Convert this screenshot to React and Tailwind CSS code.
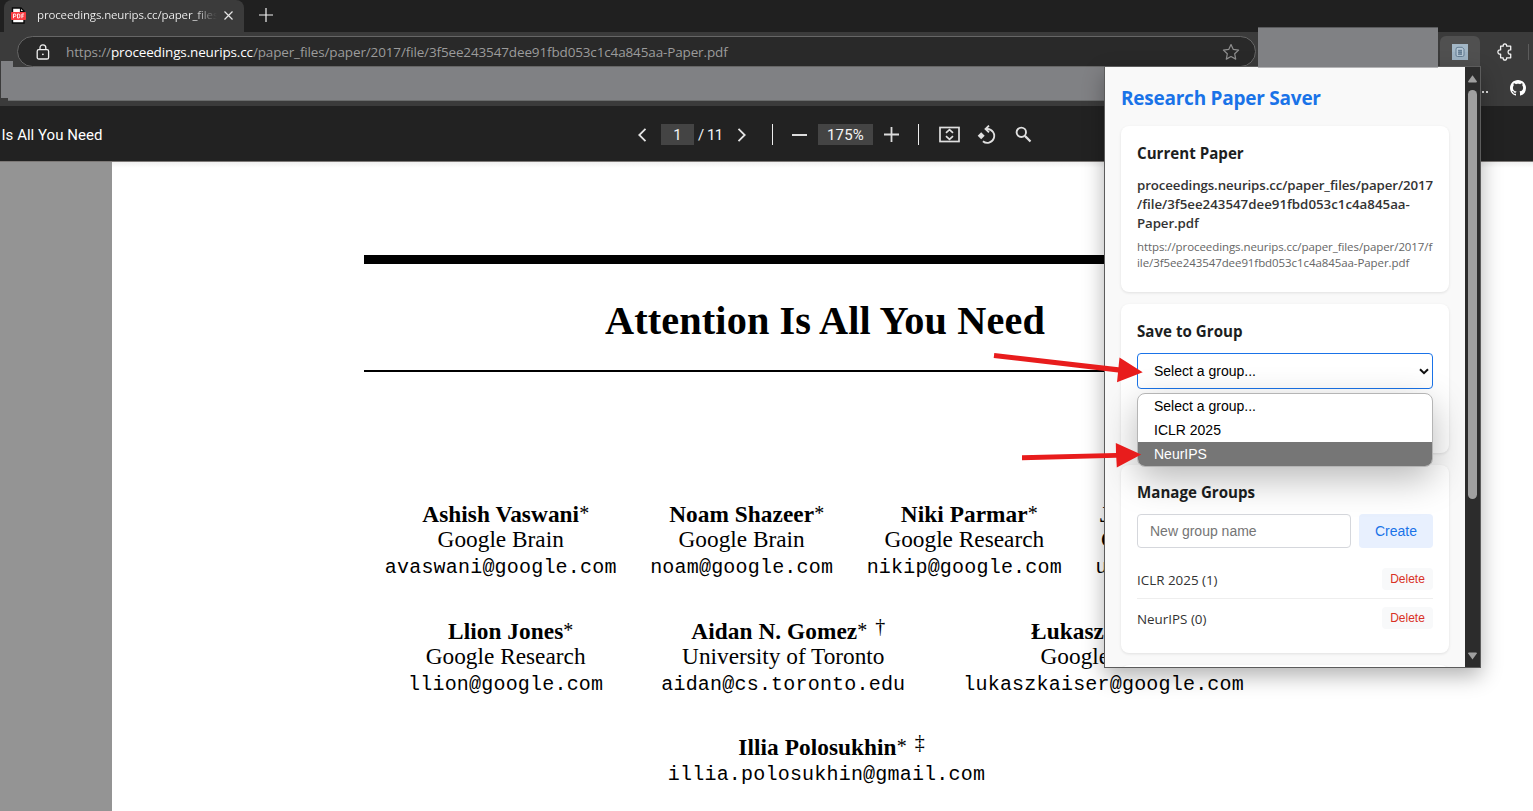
const segoe = "font-['Open_Sans','Noto_Sans',sans-serif]";
const arial = "font-['Liberation_Sans',Arial,sans-serif]";

function PdfFileIcon() {
  return (
    <svg width="15" height="17" viewBox="0 0 15 17" className="shrink-0">
      <path d="M1.5 1H10l3 3v12H1.5z" fill="#fff" stroke="#0a0a0a" strokeWidth="1.4" />
      <path d="M9.5 1v3.5H13" fill="none" stroke="#0a0a0a" strokeWidth="1.2" />
      <rect x="0" y="5" width="15" height="8" rx="0.8" fill="#f83c41" />
      <path
        d="M2.5 11.2V7h1.2a1.2 1.2 0 0 1 0 2.5H2.5M6.5 7v4h.9a1.6 1.6 0 0 0 1.5-2A1.6 1.6 0 0 0 7.4 7zM10.9 11.2V7h2.2M10.9 9.1h1.8"
        fill="none"
        stroke="#fff"
        strokeWidth="0.9"
      />
    </svg>
  );
}

function LockIcon() {
  return (
    <svg width="14" height="16" viewBox="0 0 14 16" fill="none" stroke="#f0f0f0" strokeWidth="1.3">
      <rect x="1.2" y="5.6" width="11.4" height="9.4" rx="1.6" />
      <path d="M4 5.6V3.8C4 2 5.2.8 6.9.8s2.9 1.2 2.9 3v1.8" />
      <circle cx="6.9" cy="10.3" r="0.9" fill="#f0f0f0" stroke="none" />
    </svg>
  );
}

function StarIcon() {
  return (
    <svg width="18" height="18" viewBox="0 0 18 18" fill="none" stroke="#8f8f8f" strokeWidth="1.2" strokeLinejoin="round">
      <path d="M9 1.5l2.3 4.9 5.3.7-3.9 3.7 1 5.3L9 13.5l-4.7 2.6 1-5.3L1.4 7.1l5.3-.7z" />
    </svg>
  );
}

function PuzzleIcon() {
  return (
    <svg width="16" height="18" viewBox="0 0 16 18" fill="none" stroke="#f2f2f2" strokeWidth="1.3" strokeLinejoin="round">
      <path d="M3.6 3.2h2.6C6 1.700 6.700.9 7.900.9s1.900.8 1.700 2.300h4.100v3.700c-1.700-.2-2.600.7-2.600 2.100s.9 2.300 2.600 2.100v3.700h-4.100c.2 1.500-.5 2.300-1.700 2.300s-1.900-.8-1.700-2.300H3.600v-3.700C1.900 11.300.9 10.400.9 9s1-2.300 2.700-2.100z" />
    </svg>
  );
}

function ExtensionIcon() {
  return (
    <svg width="16" height="16" viewBox="0 0 16 16">
      <rect width="16" height="16" fill="#9db2c3" />
      <rect width="16" height="8" fill="#a9bbc9" opacity="0.5" />
      <path d="M6 3.300h4.200L12 5.200V11a1.500 1.500 0 0 1-1.500 1.500h-5A1.500 1.500 0 0 1 4 11V5.200A1.900 1.900 0 0 1 6 3.300z" fill="#b4c6d4" stroke="#647d93" strokeWidth="1" />
      <rect x="6.200" y="6" width="3.800" height="4.600" fill="#7f97ab" />
      <path d="M6 6.300h4M6 8.300h4M6 10.300h4" stroke="#566f86" strokeWidth="0.8" />
    </svg>
  );
}

function GithubIcon() {
  return (
    <svg width="16" height="16" viewBox="0 0 16 16" fill="#fff">
      <path d="M8 0C3.58 0 0 3.58 0 8c0 3.54 2.29 6.53 5.47 7.59.4.07.55-.17.55-.38 0-.19-.01-.82-.01-1.49-2.01.37-2.53-.49-2.69-.94-.09-.23-.48-.94-.82-1.13-.28-.15-.68-.52-.01-.53.63-.01 1.08.58 1.23.82.72 1.21 1.87.87 2.33.66.07-.52.28-.87.51-1.07-1.78-.2-3.64-.89-3.64-3.95 0-.87.31-1.59.82-2.15-.08-.2-.36-1.02.08-2.12 0 0 .67-.21 2.2.82.64-.18 1.32-.27 2-.27s1.36.09 2 .27c1.53-1.04 2.2-.82 2.2-.82.44 1.1.16 1.92.08 2.12.51.56.82 1.27.82 2.15 0 3.07-1.87 3.75-3.65 3.95.29.25.54.73.54 1.48 0 1.07-.01 1.93-.01 2.2 0 .21.15.46.55.38A8.01 8.01 0 0 0 16 8c0-4.42-3.58-8-8-8z" />
    </svg>
  );
}

function TabStrip() {
  return (
    <div className="flex h-8 shrink-0 bg-[#202020]">
      <div className={`ml-1 flex h-8 w-[240px] items-center rounded-t-lg bg-[#3b3b3b] pb-[2px] pl-[7px] ${segoe}`}>
        <PdfFileIcon />
        <div className="ml-[11px] w-[180px] overflow-hidden bg-linear-to-r from-[#f4f4f4] from-88% to-[#3b3b3b] bg-clip-text text-[11.5px] tracking-[-0.14px] whitespace-nowrap text-transparent">
          proceedings.neurips.cc/paper_files
        </div>
        <svg width="9" height="9" viewBox="0 0 9 9" stroke="#e6e6e6" strokeWidth="1.2" className="ml-[7px]">
          <path d="M.5.5l8 8M8.500.5l-8 8" />
        </svg>
      </div>
      <svg width="14" height="14" viewBox="0 0 14 14" stroke="#f2f2f2" strokeWidth="1.2" className="mt-2 ml-[15px]">
        <path d="M7 0v14M0 7h14" />
      </svg>
    </div>
  );
}

function AddressBar() {
  return (
    <div className="flex h-[41px] shrink-0 items-start bg-[#3b3b3b] pt-1 pl-[17px]">
      <div className={`flex h-[31px] w-[1239px] items-center rounded-full border border-[#666] bg-[#292929] pl-[18px] ${segoe}`}>
        <LockIcon />
        <div className="ml-[16px] flex-1 pt-[2px] text-[13.5px] tracking-[-0.14px] whitespace-nowrap text-[#9b9b9b]">
          https://<span className="text-white">proceedings.neurips.cc</span>
          /paper_files/paper/2017/file/3f5ee243547dee91fbd053c1c4a845aa-Paper.pdf
        </div>
        <div className="mr-[15px]">
          <StarIcon />
        </div>
      </div>
      <div className="ml-[184px] flex h-[31px] w-10 items-center justify-center rounded-t-md bg-[#505050]">
        <ExtensionIcon />
      </div>
      <div className="ml-[17px] flex h-[31px] items-center">
        <PuzzleIcon />
      </div>
      <div className="mt-[8px] ml-[15px] h-[16px] w-px bg-[#5c5c5c]" />
    </div>
  );
}

function BookmarksBar() {
  return (
    <div className="flex h-[33px] shrink-0 items-center justify-end gap-[22px] bg-[#3b3b3b] pr-[7px]">
      <div className="mt-[5px] flex gap-[2px]">
        <i className="size-[2px] bg-[#ddd]" />
        <i className="size-[2px] bg-[#ddd]" />
        <i className="size-[2px] bg-[#ddd]" />
      </div>
      <div className="mb-[3px] h-[16px]">
        <GithubIcon />
      </div>
    </div>
  );
}

function PdfToolbar() {
  return (
    <div className="flex h-[56px] shrink-0 items-center border-b border-[#7c7876] bg-[#222] pt-[2px] font-[Roboto,sans-serif] text-[15px] leading-5 text-[#f4f4f4]">
      <div className="w-[637px] pl-[1.5px] tracking-[0.03px] text-white">Is All You Need</div>
      <svg width="10" height="14" viewBox="0 0 10 14" fill="none" stroke="#e4e4e4" strokeWidth="1.8">
        <path d="M8.500.8L2.300 7l6.200 6.200" />
      </svg>
      <div className="ml-[14px] flex h-[21px] w-[33px] items-center justify-center bg-[#444]">1</div>
      <div className="ml-[4px] w-[25px] tracking-[-0.5px] whitespace-nowrap">/ 11</div>
      <svg width="10" height="14" viewBox="0 0 10 14" fill="none" stroke="#e4e4e4" strokeWidth="1.8" className="ml-[14px]">
        <path d="M1.500.8L7.700 7l-6.200 6.200" />
      </svg>
      <div className="ml-[25px] h-[21px] w-px bg-[#ededed]" />
      <div className="ml-[19px] h-[2px] w-[15px] bg-[#dcdcdc]" />
      <div className="ml-[11px] flex h-[21px] w-[55px] items-center justify-center bg-[#444] tracking-[0.2px]">175%</div>
      <svg width="15" height="15" viewBox="0 0 15 15" stroke="#dcdcdc" strokeWidth="1.8" className="ml-[11px]">
        <path d="M7.500 0v15M0 7.500h15" />
      </svg>
      <div className="ml-[19px] h-[21px] w-px bg-[#ededed]" />
      <svg width="21" height="17" viewBox="0 0 21 17" fill="none" stroke="#e0e0e0" className="ml-[20px]">
        <rect x="1" y="1.500" width="19" height="14" strokeWidth="1.700" />
        <path d="M7 6.900l3.500-3.200L14 6.900M7 10.100l3.500 3.200 3.500-3.200" strokeWidth="1.700" />
      </svg>
      <svg width="19" height="20" viewBox="0 0 19 20" fill="none" stroke="#e0e0e0" strokeWidth="1.800" className="ml-[17px]">
        <path d="M9 4h1.500a6.900 6.900 0 1 1-4.600 12.200" />
        <path d="M12 .6L8.500 4 12 7.400" />
        <path d="M4.200 7.200L7.700 10.700 4.200 14.200.7 10.700z" fill="#e0e0e0" stroke="none" />
      </svg>
      <svg width="17" height="17" viewBox="0 0 17 17" fill="none" stroke="#e0e0e0" className="ml-[19px]">
        <circle cx="6.300" cy="6.300" r="4.700" strokeWidth="1.900" />
        <path d="M9.900 9.900l5.600 5.600" strokeWidth="2.200" />
      </svg>
    </div>
  );
}

function Author({ name, org, email, mark }) {
  return (
    <div className="flex flex-col items-center whitespace-nowrap">
      <div className="relative h-[25px] text-[23.3px] leading-[25px] font-bold tracking-[0.06px]">
        {name}
        {mark ? (
          <>
            <span className="relative -top-[2px] inline-block w-[18px] text-[20px] leading-none font-normal">*</span>
            <span className="absolute -top-[5px] left-full text-[20px] leading-[25px] font-normal">{mark}</span>
          </>
        ) : (
          <span className="absolute -top-[1px] left-full text-[20px] leading-[25px] font-normal">*</span>
        )}
      </div>
      {org && <div className="h-[26px] text-[23.3px] leading-[24px]">{org}</div>}
      <div className="h-[27px] font-['Liberation_Mono','Courier_New',monospace] text-[20px] leading-[29px] tracking-[0.2px]">{email}</div>
    </div>
  );
}

function Paper() {
  return (
    <div className="flex min-h-0 flex-1 overflow-hidden bg-[#949494]">
      <div className="ml-[112px] flex w-[1429px] shrink-0 flex-col items-center bg-white bg-linear-to-b from-[#f0f0f0] to-white to-[6px] font-['Liberation_Serif','Times_New_Roman',serif] text-black">
        <div className="mt-[93px] h-[9px] w-[925px] shrink-0 bg-black" />
        <h1 className="mt-[34px] mr-[3px] h-[46px] text-[40.3px] leading-[46px] font-bold tracking-[0.1px] whitespace-nowrap">Attention Is All You Need</h1>
        <div className="mt-[26px] h-[2px] w-[925px] shrink-0 bg-black" />
        <div className="mt-[130px] mr-[2px] flex gap-[33.5px]">
          <Author name="Ashish Vaswani" org="Google Brain" email="avaswani@google.com" />
          <Author name="Noam Shazeer" org="Google Brain" email="noam@google.com" />
          <Author name="Niki Parmar" org="Google Research" email="nikip@google.com" />
          <Author name="Jakob Uszkoreit" org="Google Research" email="usz@google.com" />
        </div>
        <div className="mt-[39px] mr-px flex gap-[58px]">
          <Author name="Llion Jones" org="Google Research" email="llion@google.com" />
          <Author name="Aidan N. Gomez" org="University of Toronto" email="aidan@cs.toronto.edu" mark="†" />
          <Author name="Łukasz Kaiser" org="Google Brain" email="lukaszkaiser@google.com" />
        </div>
        <div className="mt-[38px] flex">
          <Author name="Illia Polosukhin" email="illia.polosukhin@gmail.com" mark="‡" />
        </div>
      </div>
    </div>
  );
}

function Card({ title, className, children }) {
  return (
    <section className={`shrink-0 rounded-lg bg-white p-4 shadow-[0_1px_3px_rgba(0,0,0,0.1)] ${className}`}>
      <h2 className="h-[22px] text-[15.1px] leading-[23px] font-bold tracking-[0.02px] text-[#1c1e21]">{title}</h2>
      {children}
    </section>
  );
}

function GroupRow({ label, last }) {
  return (
    <div className={`flex items-center justify-between py-2 ${last ? "" : "border-b border-[#eee]"}`}>
      <span className="pt-[2px] text-[13.4px] leading-5 text-[#333]">{label}</span>
      <button className={`h-[22px] w-[51px] rounded bg-[#f8f9fa] text-[12px] leading-[22px] text-[#d93025] ${arial}`}>Delete</button>
    </div>
  );
}

function Scrollbar() {
  return (
    <div className="flex w-[15px] flex-col items-center bg-[#2c2c2c]">
      <svg width="9" height="8" viewBox="0 0 9 8" fill="#9f9f9f" className="mt-[8px]">
        <path d="M4.500.2L8.800 6.200Q9 7.500 8 7.500H1Q0 7.500.2 6.200z" />
      </svg>
      <div className="mt-[7px] h-[409px] w-[9px] rounded-full bg-[#9f9f9f]" />
      <div className="flex-1" />
      <svg width="9" height="8" viewBox="0 0 9 8" fill="#9f9f9f" className="mb-[7px]">
        <path d="M4.500 7.500L8.800 1.500Q9 .4 8 .4H1Q0 .4.2 1.500z" />
      </svg>
    </div>
  );
}

function Popup() {
  return (
    <div className="absolute top-[66px] left-[1104px] flex h-[602px] w-[377px] border border-[#5c5c5c] bg-[#f9f9f9] shadow-[0_8px_20px_rgba(0,0,0,0.3)]">
      <div className={`flex w-[360px] flex-col overflow-hidden px-4 pt-4 ${segoe}`}>
        <h1 className="h-[43px] shrink-0 text-[19px] leading-[30px] font-bold tracking-[-0.24px] text-[#1a73e8]">Research Paper Saver</h1>
        <Card title="Current Paper" className="h-[166px]">
          <div className="mt-[12px] text-[13.3px] leading-[19px] font-semibold tracking-[-0.11px] whitespace-nowrap text-[#333]">
            proceedings.neurips.cc/paper_files/paper/2017
            <br />
            <span className="tracking-[0]">/file/3f5ee243547dee91fbd053c1c4a845aa-</span>
            <br />
            Paper.pdf
          </div>
          <div className="mt-[6px] text-[11.5px] leading-4 tracking-[-0.08px] whitespace-nowrap text-[#666]">
            https://proceedings.neurips.cc/paper_files/paper/2017/f
            <br />
            ile/3f5ee243547dee91fbd053c1c4a845aa-Paper.pdf
          </div>
        </Card>
        <Card title="Save to Group" className="mt-3 h-[149px]">
          <div className={`relative mt-[11px] flex h-9 items-center justify-between rounded border border-[#1a73e8] bg-white pr-[3px] pl-4 text-[14px] text-black ${arial}`}>
            <span>Select a group...</span>
            <svg width="10" height="7" viewBox="0 0 10 7" fill="none" stroke="#111" strokeWidth="2">
              <path d="M1 1.200l4 4 4-4" />
            </svg>
            <ul className="absolute top-[39px] -left-px z-10 w-[296px] overflow-hidden rounded-lg border border-[#b5b5b5] bg-white leading-6 shadow-[0_12px_36px_rgba(0,0,0,0.28)]">
              <li className="h-6 pl-4">Select a group...</li>
              <li className="h-6 pl-4">ICLR 2025</li>
              <li className="h-6 bg-[#767676] pl-4 text-white">NeurIPS</li>
            </ul>
          </div>
        </Card>
        <Card title="Manage Groups" className="mt-3 h-[188px]">
          <div className={`mt-[11px] mb-3 flex h-[34px] gap-2 text-[14px] ${arial}`}>
            <div className="flex w-[214px] items-center rounded border border-[#d5d7dc] pl-3 text-[#757575]">New group name</div>
            <button className="w-[74px] rounded bg-[#e8f0fe] text-[#1a73e8]">Create</button>
          </div>
          <GroupRow label="ICLR 2025 (1)" />
          <GroupRow label="NeurIPS (0)" last />
        </Card>
        <div className="mt-3 h-10 shrink-0 rounded-lg bg-white shadow-[0_1px_3px_rgba(0,0,0,0.1)]" />
      </div>
      <Scrollbar />
    </div>
  );
}

function Redactions() {
  return (
    <>
      <div className="absolute top-[61px] left-px h-[37px] w-[12px] bg-[#808184]" />
      <div className="absolute top-[67px] left-[8px] h-[34px] w-[1096px] border-b border-[#6a6c6c] bg-[#808184]" />
      <div className="absolute top-[27px] left-[1258px] z-20 h-[41px] w-[180px] border-t border-b border-t-[#5a5b5d] border-b-[#b4b4b6] bg-[#808184]" />
    </>
  );
}

function Arrows() {
  return (
    <svg width="160" height="130" viewBox="990 345 160 130" fill="#e81c1c" className="absolute top-[345px] left-[990px] z-30">
      <path d="M994.300 353L1118.500 367.300 1119.500 357.500 1142.700 372.300 1117 382.200 1118 372.600 993.700 358z" />
      <path d="M1022 455.200L1116 453 1115.800 443 1141.200 454.500 1116.800 467.500 1116.300 457.800 1022 460.200z" />
    </svg>
  );
}

export default function App() {
  return (
    <div className="relative flex h-[811px] w-[1533px] flex-col overflow-hidden bg-[#202020]">
      <TabStrip />
      <AddressBar />
      <BookmarksBar />
      <PdfToolbar />
      <Paper />
      <Redactions />
      <Popup />
      <Arrows />
    </div>
  );
}
